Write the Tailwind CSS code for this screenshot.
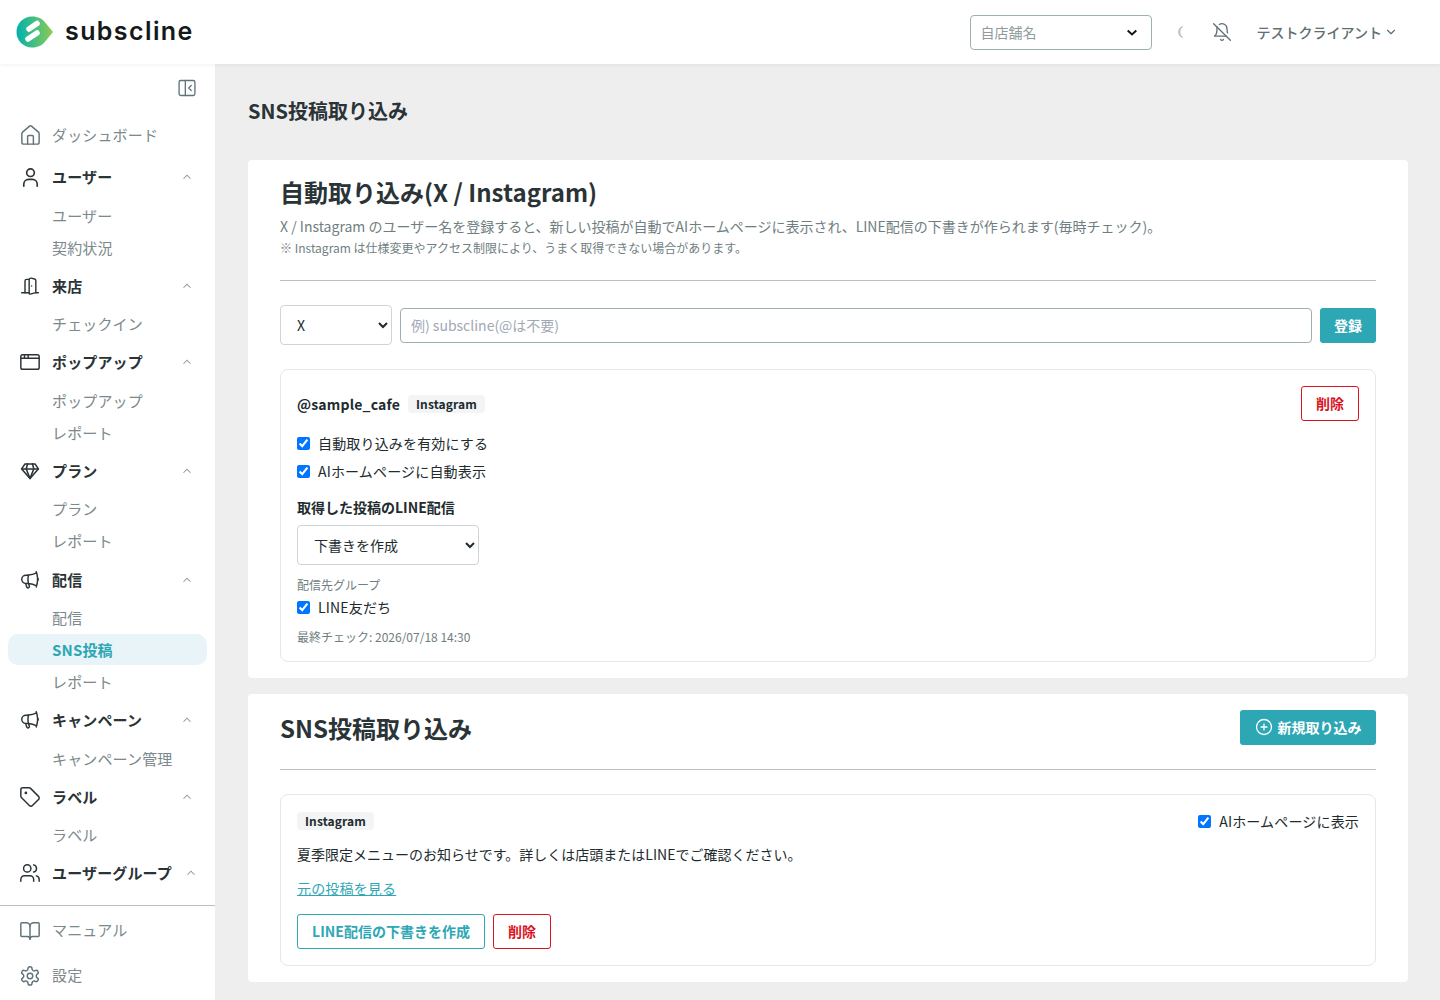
<!DOCTYPE html>
<html lang="ja">
<head>
<meta charset="utf-8">
<title>SNS投稿取り込み</title>
<script src="https://cdn.jsdelivr.net/npm/@tailwindcss/browser@4"></script>
</head>
<body class="h-[1000px] w-[1440px] overflow-hidden bg-[#eeeeee] font-['Noto_Sans_CJK_JP','Noto_Sans',sans-serif] text-[#212b2e]">
<header class="relative z-10 flex h-16 items-center justify-between bg-white pl-4 pr-[42px] shadow-[0_1px_4px_rgba(0,0,0,0.06)]">
  <div class="flex items-center gap-[11px]">
    <svg width="38" height="32" viewBox="0 0 38 32"><defs><linearGradient id="lg" x1="0" x2="1" y1="0" y2="0"><stop offset="0" stop-color="#00b2ad"/><stop offset="1" stop-color="#8dcb52"/></linearGradient></defs><path d="M16 0.500C22 0.500 27 3 30 7.500L37 16L30 24.500C27 29 22 31.500 16 31.500C7.400 31.500 0.500 24.600 0.500 16C0.500 7.400 7.400 0.500 16 0.500Z" fill="url(#lg)"/><path d="M13 13L21 7.500M12 23L21 17" stroke="#fff" stroke-width="5.500" stroke-linecap="round" fill="none"/></svg>
    <span class="relative top-[-1px] font-['Inter',sans-serif] text-[25px] font-semibold leading-none tracking-[1.4px] text-[#15191a]">subscline</span>
  </div>
  <div class="flex items-center">
    <div class="relative h-[35px] w-[182px]">
      <select class="h-full w-full appearance-none rounded border border-[#9fb0b3] bg-white pl-[10px] text-sm text-[#8f9c9e]"><option>自店舗名</option></select>
      <svg class="pointer-events-none absolute right-[15px] top-[14px]" width="10" height="8" viewBox="0 0 10 8" fill="none" stroke="#15191a" stroke-width="2"><path d="M0.700 1.500 5 5.500 9.300 1.500"/></svg>
    </div>
    <svg class="ml-[22px]" width="10" height="14" viewBox="0 0 10 14" fill="none" stroke="#a6b0b2" stroke-width="0.900" stroke-linejoin="round"><path d="M8.500 1.500A5.800 5.800 0 0 0 8.500 12.500A6.800 6.800 0 0 1 8.500 1.500Z"/></svg>
    <svg class="ml-[28px]" width="20" height="20" viewBox="0 0 24 24" fill="none" stroke="#5f6f73" stroke-width="1.600" stroke-linecap="round" stroke-linejoin="round"><path d="M8.700 3A6 6 0 0 1 18 8a21.300 21.300 0 0 0 .6 5"/><path d="M17 17H3s3-2 3-9a4.700 4.700 0 0 1 .3-2"/><path d="M10.300 21a1.940 1.940 0 0 0 3.400 0"/><path d="m2 2 20 20"/></svg>
    <span class="ml-[25px] text-sm font-medium text-[#5f6f73]">テストクライアント</span>
    <svg class="ml-[2px]" width="14" height="14" viewBox="0 0 24 24" fill="none" stroke="#5f6f73" stroke-width="2" stroke-linecap="round" stroke-linejoin="round"><path d="m6 9 6 6 6-6"/></svg>
  </div>
</header>
<div class="flex h-[936px]">
  <aside class="flex h-full w-[215px] shrink-0 flex-col bg-white">
    <div class="flex h-[48px] items-center justify-end pr-[18px]">
      <svg width="20" height="20" viewBox="0 0 24 24" fill="none" stroke="#5f7378" stroke-width="1.600" stroke-linecap="round" stroke-linejoin="round"><rect x="2.500" y="3" width="19" height="18" rx="2"/><path d="M10 3v18"/><path d="m17 9-3 3 3 3"/></svg>
    </div>
    <nav class="flex-1 text-[15px] tracking-[0.15px]">
      <a class="mt-[1px] flex h-[44px] items-center gap-[12px] pl-5 text-[#7b898c]"><svg class="mx-[-1.500px] shrink-0" width="23" height="23" viewBox="0 0 24 24" fill="none" stroke="#5f7378" stroke-width="1.500" stroke-linecap="round" stroke-linejoin="round"><path d="M15 21v-8a1 1 0 0 0-1-1h-4a1 1 0 0 0-1 1v8"/><path d="M3 10a2 2 0 0 1 .7-1.500l7-6a2 2 0 0 1 2.600 0l7 6A2 2 0 0 1 21 10v9a2 2 0 0 1-2 2H5a2 2 0 0 1-2-2z"/></svg>ダッシュボード</a>

      <div class="mt-[-2px] flex h-[44px] items-center gap-[12px] pl-5 pr-[21px] font-bold text-[#2a3336]"><svg class="mx-[-1.500px] shrink-0" width="23" height="23" viewBox="0 0 24 24" fill="none" stroke="#2a3336" stroke-width="1.700" stroke-linecap="round" stroke-linejoin="round"><circle cx="12" cy="7" r="4"/><path d="M5 21v-2a5 5 0 0 1 5-5h4a5 5 0 0 1 5 5v2"/></svg><span class="flex-1">ユーザー</span><svg width="14" height="14" viewBox="0 0 24 24" fill="none" stroke="#8e9a9c" stroke-width="1.800"><path d="m6 15 6-6 6 6"/></svg></div>
      <div class="mt-[1px] flex h-[32px] items-center pl-[52px] text-[#7b898c]">ユーザー</div>
      <div class="flex h-[32px] items-center pl-[52px] text-[#7b898c]">契約状況</div>

      <div class="flex h-[44px] items-center gap-[12px] pl-5 pr-[21px] font-bold text-[#2a3336]"><svg class="shrink-0" width="20" height="20" viewBox="0 0 24 24" fill="none" stroke="#2a3336" stroke-width="1.700" stroke-linecap="round" stroke-linejoin="round"><path d="M11 20H2"/><path d="M11 4.562v16.157a1 1 0 0 0 1.242.97L19 20V5.562a2 2 0 0 0-1.515-1.940l-4-1A2 2 0 0 0 11 4.561z"/><path d="M11 4H8a2 2 0 0 0-2 2v14"/><path d="M14 12h.01"/><path d="M22 20h-3"/></svg><span class="flex-1">来店</span><svg width="14" height="14" viewBox="0 0 24 24" fill="none" stroke="#8e9a9c" stroke-width="1.800"><path d="m6 15 6-6 6 6"/></svg></div>
      <div class="flex h-[32px] items-center pl-[52px] text-[#7b898c]">チェックイン</div>

      <div class="flex h-[44px] items-center gap-[12px] pl-5 pr-[21px] font-bold text-[#2a3336]"><svg class="mx-[-1px] shrink-0" width="22" height="22" viewBox="0 0 24 24" fill="none" stroke="#2a3336" stroke-width="1.600" stroke-linecap="round" stroke-linejoin="round"><rect x="2" y="4" width="20" height="16" rx="2"/><path d="M2 8h20"/><path d="M6 4v4M10 4v4"/></svg><span class="flex-1">ポップアップ</span><svg width="14" height="14" viewBox="0 0 24 24" fill="none" stroke="#8e9a9c" stroke-width="1.800"><path d="m6 15 6-6 6 6"/></svg></div>
      <div class="mt-[1px] flex h-[32px] items-center pl-[52px] text-[#7b898c]">ポップアップ</div>
      <div class="flex h-[32px] items-center pl-[52px] text-[#7b898c]">レポート</div>

      <div class="flex h-[44px] items-center gap-[12px] pl-5 pr-[21px] font-bold text-[#2a3336]"><svg class="shrink-0" width="20" height="20" viewBox="0 0 24 24" fill="none" stroke="#2a3336" stroke-width="1.900" stroke-linecap="round" stroke-linejoin="round"><path d="M6 3.500h12l4 6L12 21 2 9.500z"/><path d="M2 9.500h20"/><path d="M9 3.500 7.500 9.500 12 21l4.500-11.500L15 3.500"/></svg><span class="flex-1">プラン</span><svg width="14" height="14" viewBox="0 0 24 24" fill="none" stroke="#8e9a9c" stroke-width="1.800"><path d="m6 15 6-6 6 6"/></svg></div>
      <div class="flex h-[32px] items-center pl-[52px] text-[#7b898c]">プラン</div>
      <div class="flex h-[32px] items-center pl-[52px] text-[#7b898c]">レポート</div>

      <div class="mt-[1px] flex h-[44px] items-center gap-[12px] pl-5 pr-[21px] font-bold text-[#2a3336]"><svg class="mx-[-1px] shrink-0" width="22" height="22" viewBox="0 0 24 24" fill="none" stroke="#2a3336" stroke-width="1.600" stroke-linecap="round" stroke-linejoin="round"><path d="M10.340 15.840c-.688-.06-1.386-.09-2.090-.09H7.500a4.500 4.500 0 1 1 0-9h.75c.704 0 1.402-.03 2.090-.09m0 9.180c.253.962.584 1.892.985 2.783.247.55.06 1.210-.463 1.511l-.657.38c-.551.318-1.260.117-1.527-.461a20.845 20.845 0 0 1-1.440-4.282m3.102.069a18.030 18.030 0 0 1-.59-4.590c0-1.586.205-3.124.59-4.590m0 9.180a23.848 23.848 0 0 1 8.835 2.535M10.340 6.660a23.832 23.832 0 0 0 8.835-2.535m0 0A23.740 23.740 0 0 0 18.795 3m.38 1.125a23.910 23.910 0 0 1 1.014 5.395m-1.014 8.855c-.118.38-.245.754-.38 1.125m.38-1.125a23.863 23.863 0 0 0 1.014-5.395m0-3.460c.495.413.811 1.035.811 1.730 0 .695-.316 1.317-.811 1.730m0-3.460a24.347 24.347 0 0 1 0 3.460"/></svg><span class="flex-1">配信</span><svg width="14" height="14" viewBox="0 0 24 24" fill="none" stroke="#8e9a9c" stroke-width="1.800"><path d="m6 15 6-6 6 6"/></svg></div>
      <div class="flex h-[32px] items-center pl-[52px] text-[#7b898c]">配信</div>
      <div class="mx-2 flex h-[31px] items-center rounded-[10px] bg-[#e8f4f7] pl-[44px] pt-[1px] font-bold text-[#2ea7b5]">SNS投稿</div>
      <div class="mt-[1px] flex h-[32px] items-center pl-[52px] text-[#7b898c]">レポート</div>

      <div class="flex h-[44px] items-center gap-[12px] pl-5 pr-[21px] font-bold text-[#2a3336]"><svg class="mx-[-1px] shrink-0" width="22" height="22" viewBox="0 0 24 24" fill="none" stroke="#2a3336" stroke-width="1.600" stroke-linecap="round" stroke-linejoin="round"><path d="M10.340 15.840c-.688-.06-1.386-.09-2.090-.09H7.500a4.500 4.500 0 1 1 0-9h.75c.704 0 1.402-.03 2.090-.09m0 9.180c.253.962.584 1.892.985 2.783.247.55.06 1.210-.463 1.511l-.657.38c-.551.318-1.260.117-1.527-.461a20.845 20.845 0 0 1-1.440-4.282m3.102.069a18.030 18.030 0 0 1-.59-4.590c0-1.586.205-3.124.59-4.590m0 9.180a23.848 23.848 0 0 1 8.835 2.535M10.340 6.660a23.832 23.832 0 0 0 8.835-2.535m0 0A23.740 23.740 0 0 0 18.795 3m.38 1.125a23.910 23.910 0 0 1 1.014 5.395m-1.014 8.855c-.118.38-.245.754-.38 1.125m.38-1.125a23.863 23.863 0 0 0 1.014-5.395m0-3.460c.495.413.811 1.035.811 1.730 0 .695-.316 1.317-.811 1.730m0-3.460a24.347 24.347 0 0 1 0 3.460"/></svg><span class="flex-1">キャンペーン</span><svg width="14" height="14" viewBox="0 0 24 24" fill="none" stroke="#8e9a9c" stroke-width="1.800"><path d="m6 15 6-6 6 6"/></svg></div>
      <div class="mt-[1px] flex h-[32px] items-center pl-[52px] text-[#7b898c]">キャンペーン管理</div>

      <div class="flex h-[44px] items-center gap-[12px] pl-5 pr-[21px] font-bold text-[#2a3336]"><svg class="mx-[-1px] shrink-0" width="22" height="22" viewBox="0 0 24 24" fill="none" stroke="#2a3336" stroke-width="1.600" stroke-linecap="round" stroke-linejoin="round"><path d="M12.600 2.600A2 2 0 0 0 11.200 2H4a2 2 0 0 0-2 2v7.200a2 2 0 0 0 .6 1.400l8.700 8.700a2.400 2.400 0 0 0 3.400 0l6.600-6.600a2.400 2.400 0 0 0 0-3.400z"/><circle cx="7.500" cy="7.500" r=".7" fill="#2a3336"/></svg><span class="flex-1">ラベル</span><svg width="14" height="14" viewBox="0 0 24 24" fill="none" stroke="#8e9a9c" stroke-width="1.800"><path d="m6 15 6-6 6 6"/></svg></div>
      <div class="flex h-[32px] items-center pl-[52px] text-[#7b898c]">ラベル</div>

      <div class="flex h-[44px] items-center gap-[12px] pl-5 pr-[21px] font-bold text-[#2a3336]"><svg class="mx-[-1px] shrink-0" width="22" height="22" viewBox="0 0 24 24" fill="none" stroke="#2a3336" stroke-width="1.600" stroke-linecap="round" stroke-linejoin="round"><path d="M16 21v-2a4 4 0 0 0-4-4H6a4 4 0 0 0-4 4v2"/><circle cx="9" cy="7" r="4"/><path d="M22 21v-2a4 4 0 0 0-3-3.900"/><path d="M16 3.100a4 4 0 0 1 0 7.800"/></svg><span class="flex-1 whitespace-nowrap">ユーザーグループ</span><svg class="shrink-0" width="14" height="14" viewBox="0 0 24 24" fill="none" stroke="#8e9a9c" stroke-width="1.800"><path d="m6 15 6-6 6 6"/></svg></div>
    </nav>
    <div class="border-t border-[#b5bfc1] pb-[2px] text-[15px] tracking-[0.15px] text-[#7b898c]">
      <a class="mt-[2px] flex h-[45px] items-center gap-[12px] pl-5"><svg class="mx-[-1px] shrink-0" width="22" height="22" viewBox="0 0 24 24" fill="none" stroke="#5f7378" stroke-width="1.600" stroke-linecap="round" stroke-linejoin="round"><path d="M12 7v14"/><path d="M3 18a1 1 0 0 1-1-1V4a1 1 0 0 1 1-1h5a4 4 0 0 1 4 4 4 4 0 0 1 4-4h5a1 1 0 0 1 1 1v13a1 1 0 0 1-1 1h-6a3 3 0 0 0-3 3 3 3 0 0 0-3-3z"/></svg>マニュアル</a>
      <a class="flex h-[45px] items-center gap-[12px] pl-5"><svg class="mx-[-1px] shrink-0" width="22" height="22" viewBox="0 0 24 24" fill="none" stroke="#5f7378" stroke-width="1.600" stroke-linecap="round" stroke-linejoin="round"><path d="M12.200 2h-.4a2 2 0 0 0-2 2v.2a2 2 0 0 1-1 1.700l-.4.300a2 2 0 0 1-2 0l-.2-.1a2 2 0 0 0-2.700.7l-.2.400a2 2 0 0 0 .7 2.700l.2.100a2 2 0 0 1 1 1.700v.5a2 2 0 0 1-1 1.700l-.2.100a2 2 0 0 0-.7 2.700l.2.400a2 2 0 0 0 2.700.7l.2-.1a2 2 0 0 1 2 0l.4.300a2 2 0 0 1 1 1.700v.2a2 2 0 0 0 2 2h.4a2 2 0 0 0 2-2v-.2a2 2 0 0 1 1-1.700l.4-.3a2 2 0 0 1 2 0l.2.100a2 2 0 0 0 2.700-.7l.2-.4a2 2 0 0 0-.7-2.700l-.2-.1a2 2 0 0 1-1-1.700v-.5a2 2 0 0 1 1-1.700l.2-.1a2 2 0 0 0 .7-2.700l-.2-.4a2 2 0 0 0-2.700-.7l-.2.100a2 2 0 0 1-2 0l-.4-.3a2 2 0 0 1-1-1.700V4a2 2 0 0 0-2-2z"/><circle cx="12" cy="12" r="3"/></svg>設定</a>
    </div>
  </aside>
  <main class="flex-1 pl-[33px] pr-8">
    <h1 class="flex h-[96px] items-center pb-[2px] text-xl font-semibold text-[#2a3336]">SNS投稿取り込み</h1>
    <section class="h-[518px] rounded bg-white px-8 pt-[11px]">
      <h2 class="text-2xl font-semibold leading-[42px] text-[#2a3336]">自動取り込み(X / Instagram)</h2>
      <p class="mt-[1px] text-sm leading-[24px] text-[#6f7e81]">X / Instagram のユーザー名を登録すると、新しい投稿が自動でAIホームページに表示され、LINE配信の下書きが作られます(毎時チェック)。</p>
      <p class="text-xs leading-[20px] text-[#6f7e81]">※ Instagram は仕様変更やアクセス制限により、うまく取得できない場合があります。</p>
      <div class="mt-[22px] border-t border-[#b8c2c4]"></div>
      <div class="mt-6 flex items-center gap-2">
        <select class="h-10 w-[112px] rounded border border-[#ced4da] bg-white pl-3 text-sm text-[#212b2e]"><option>X</option></select>
        <input class="h-[35px] flex-1 rounded border border-[#9fb0b3] bg-white px-[10px] text-sm outline-none placeholder:text-[#a0a8b4]" placeholder="例) subscline(@は不要)">
        <button class="h-[35px] w-14 rounded-[3px] bg-[#2ea7b5] pb-[1px] text-sm font-semibold text-white">登録</button>
      </div>
      <div class="mt-6 h-[293px] rounded-lg border border-[#e5e8e9] p-4">
        <div class="flex items-start justify-between">
          <div class="flex h-[35px] items-center gap-2">
            <span class="text-sm font-semibold tracking-[0.17px] text-[#212b2e]">@sample_cafe</span>
            <span class="rounded bg-[#f3f4f5] px-2 py-[1px] text-xs font-semibold tracking-[0.12px] text-[#212b2e]">Instagram</span>
          </div>
          <button class="h-[35px] w-[58px] rounded-[3px] border border-[#d9141e] bg-white pb-[1px] text-sm font-semibold text-[#d9141e]">削除</button>
        </div>
        <label class="mt-[8px] flex h-7 items-center gap-2 text-sm tracking-[0.17px] text-[#212b2e]"><input type="checkbox" checked class="size-[13px]">自動取り込みを有効にする</label>
        <label class="flex h-7 items-center gap-2 text-sm tracking-[0.17px] text-[#212b2e]"><input type="checkbox" checked class="size-[13px]">AIホームページに自動表示</label>
        <p class="mt-[10px] text-sm font-semibold leading-[24px] text-[#212b2e]">取得した投稿のLINE配信</p>
        <select class="mt-[6px] block h-10 w-[182px] rounded border border-[#ced4da] bg-white pb-[1px] pl-3 text-sm text-[#212b2e]"><option>下書きを作成</option></select>
        <p class="mt-[11px] text-xs leading-[18px] text-[#6f7e81]">配信先グループ</p>
        <label class="mt-[1px] flex h-6 items-center gap-2 text-sm tracking-[0.17px] text-[#212b2e]"><input type="checkbox" checked class="size-[13px]">LINE友だち</label>
        <p class="mt-[9px] text-xs leading-[18px] text-[#6f7e81]">最終チェック: 2026/07/18 14:30</p>
      </div>
    </section>
    <section class="mt-4 h-[288px] rounded bg-white px-8 pt-4">
      <div class="flex h-[35px] items-center justify-between">
        <h2 class="text-[24px] font-semibold text-[#2a3336]">SNS投稿取り込み</h2>
        <button class="flex h-[35px] w-[136px] items-center justify-center gap-[5px] rounded-[3px] bg-[#2ea7b5] pb-[1px] text-sm font-semibold text-white"><svg width="18" height="18" viewBox="0 0 24 24" fill="none" stroke="#fff" stroke-width="1.700" stroke-linecap="round"><circle cx="12" cy="12" r="10"/><path d="M8 12h8M12 8v8"/></svg>新規取り込み</button>
      </div>
      <div class="mt-6 border-t border-[#b8c2c4]"></div>
      <div class="mt-6 h-[172px] rounded-lg border border-[#e5e8e9] px-4 pt-[15px]">
        <div class="flex h-[22px] items-center justify-between">
          <span class="rounded bg-[#f3f4f5] px-2 py-[1px] text-xs font-semibold tracking-[0.12px] text-[#212b2e]">Instagram</span>
          <label class="flex items-center gap-2 text-sm tracking-[0.17px] text-[#212b2e]"><input type="checkbox" checked class="size-[13px]">AIホームページに表示</label>
        </div>
        <p class="mt-[10px] text-sm leading-[24px] text-[#212b2e]">夏季限定メニューのお知らせです。詳しくは店頭またはLINEでご確認ください。</p>
        <a class="mt-[10px] block text-sm leading-[24px] tracking-[0.17px] text-[#2ea7b5] underline">元の投稿を見る</a>
        <div class="mt-[14px] flex gap-2">
          <button class="h-[35px] w-[188px] rounded-[3px] border border-[#2ea7b5] bg-white pb-[1px] text-sm font-semibold text-[#2ea7b5]">LINE配信の下書きを作成</button>
          <button class="h-[35px] w-[58px] rounded-[3px] border border-[#d9141e] bg-white pb-[1px] text-sm font-semibold text-[#d9141e]">削除</button>
        </div>
      </div>
    </section>
  </main>
</div>
</body>
</html>
